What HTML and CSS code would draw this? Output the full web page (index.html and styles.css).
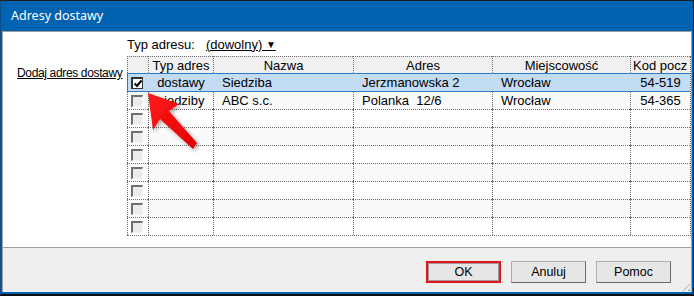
FILE: index.html
```html
<!DOCTYPE html>
<html lang="pl">
<head>
    <meta charset="UTF-8">
    <title>Adresy dostawy</title>
    <link rel="stylesheet" href="styles.css">
</head>
<body>
    <div class="window">
        <div class="titlebar">Adresy dostawy</div>
        <div class="client">
            <div class="content">
                <div class="side">
                    <a class="link" href="#">Dodaj adres dostawy</a>
                </div>
                <div class="main">
                    <div class="filter">
                        <span>Typ adresu:</span>
                        <span class="combo">(dowolny) <span class="tri">&#9660;</span></span>
                    </div>
                    <table class="grid">
                        <colgroup>
                            <col style="width: 21px">
                            <col style="width: 65px">
                            <col style="width: 140px">
                            <col style="width: 139px">
                            <col style="width: 138px">
                            <col style="width: 60px">
                        </colgroup>
                        <tr class="head">
                            <td></td>
                            <td>Typ adres</td>
                            <td>Nazwa</td>
                            <td>Adres</td>
                            <td>Miejscowość</td>
                            <td class="clip">Kod pocz</td>
                        </tr>
                        <tr class="sel">
                            <td><span class="cb checked"><svg width="10" height="10" viewBox="0 0 10 10"><path d="M1.5 4.5 L4 7 L8.5 1.5" fill="none" stroke="#000" stroke-width="2"/></svg></span></td>
                            <td class="c">dostawy</td>
                            <td class="l">Siedziba</td>
                            <td class="l">Jerzmanowska 2</td>
                            <td class="l">Wrocław</td>
                            <td class="c">54-519</td>
                        </tr>
                        <tr class="alt">
                            <td><span class="cb"></span></td>
                            <td class="c">siedziby</td>
                            <td class="l">ABC s.c.</td>
                            <td class="l">Polanka&nbsp; 12/6</td>
                            <td class="l">Wrocław</td>
                            <td class="c">54-365</td>
                        </tr>
                        <tr><td><span class="cb"></span></td><td></td><td></td><td></td><td></td><td></td></tr>
                        <tr class="alt"><td><span class="cb"></span></td><td></td><td></td><td></td><td></td><td></td></tr>
                        <tr><td><span class="cb"></span></td><td></td><td></td><td></td><td></td><td></td></tr>
                        <tr class="alt"><td><span class="cb"></span></td><td></td><td></td><td></td><td></td><td></td></tr>
                        <tr><td><span class="cb"></span></td><td></td><td></td><td></td><td></td><td></td></tr>
                        <tr class="alt"><td><span class="cb"></span></td><td></td><td></td><td></td><td></td><td></td></tr>
                        <tr><td><span class="cb"></span></td><td></td><td></td><td></td><td></td><td></td></tr>
                    </table>
                </div>
            </div>
            <div class="footer">
                <button class="btn ok">OK</button>
                <button class="btn">Anuluj</button>
                <button class="btn">Pomoc</button>
                <span class="grip"></span>
            </div>
        </div>

        <!-- red pointer arrow drawn over the grid -->
        <svg class="arrow" width="694" height="296" viewBox="0 0 694 296">
            <defs>
                <linearGradient id="red" x1="0" y1="0" x2="1" y2="1">
                    <stop offset="0" stop-color="#ff1a1a"/>
                    <stop offset="1" stop-color="#e00000"/>
                </linearGradient>
                <filter id="shadow" x="-30%" y="-30%" width="160%" height="160%">
                    <feDropShadow dx="2" dy="2" stdDeviation="2" flood-color="#000" flood-opacity="0.35"/>
                </filter>
            </defs>
            <polygon points="148,93 179,104 169,111 197,143 193,149 160,119 153,130" fill="url(#red)" filter="url(#shadow)"/>
        </svg>
    </div>
</body>
</html>
```

FILE: styles.css
```css
body {
    margin: 0;
    background: #ffffff;
    font-family: "Liberation Sans", Arial, sans-serif;
    font-size: 13px;
    color: #000;
}
.window {
    position: relative;
    width: 694px;
    height: 296px;
    box-sizing: border-box;
    border: 1px solid #1e1e1e;
    border-left-color: #0a4f8c;
    border-bottom-width: 2px;
    border-bottom-color: #111;
    background: #0063b1;
    padding: 0 1px 2px 1px;
    display: flex;
    flex-direction: column;
}
.titlebar {
    height: 30px;
    line-height: 30px;
    padding-left: 9px;
    color: #ffffff;
    font-family: "Noto Sans", "Open Sans", sans-serif;
    font-size: 12.5px;
}
.client {
    flex: 1;
    display: flex;
    flex-direction: column;
    border: 1px solid #a0a0a0;
    border-bottom: none;
    background: #efefef;
}
.content {
    flex: 1;
    background: #ffffff;
    display: grid;
    grid-template-columns: 124px 1fr;
    border-bottom: 1px solid #a0a0a0;
}
.side {
    padding: 33px 0 0 14px;
    white-space: nowrap;
    overflow: hidden;
}
.link {
    color: #000;
    font-size: 12px;
    letter-spacing: -0.35px;
    line-height: 14px;
    text-decoration: underline;
}
.main {
    overflow: hidden;
}
.filter {
    height: 24px;
    display: flex;
    align-items: center;
    gap: 11px;
}
.combo {
    text-decoration: underline;
    white-space: nowrap;
}
.tri {
    font-size: 10px;
    position: relative;
    top: -1px;
}
.grid {
    table-layout: fixed;
    width: 564px;
    border-collapse: separate;
    border-spacing: 0;
    border-right: 1px dotted #6e6e6e;
    border-bottom: 1px dotted #6e6e6e;
}
.grid td {
    box-sizing: border-box;
    height: 18px;
    padding: 0;
    border-left: 1px dotted #6e6e6e;
    border-top: 1px dotted #6e6e6e;
    white-space: nowrap;
    overflow: hidden;
    line-height: 16px;
    font-size: 13px;
}
.grid .head td {
    height: 17px;
    background: #f0f0f0;
    text-align: center;
    line-height: 15px;
}
.grid .head td.clip {
    text-align: left;
    padding-left: 2px;
}
.grid .alt td {
    background: #fafafa;
}
.grid .sel td {
    background: #c2dcf4;
    border-top: 1px solid #2b7bc2;
    border-left-color: transparent;
}
.grid .sel td:first-child {
    border-left: 1px solid #2b7bc2;
}
.grid .sel + tr td {
    border-top: 1px solid #2b7bc2;
}
.grid td.c {
    text-align: center;
}
.grid td.l {
    padding-left: 8px;
}
.cb {
    display: block;
    width: 12px;
    height: 12px;
    box-sizing: border-box;
    margin-left: 3px;
    border-top: 2px solid #6f6f6f;
    border-left: 2px solid #6f6f6f;
    border-right: 1px solid #f4f4f4;
    border-bottom: 1px solid #f4f4f4;
    background: #ececec;
}
.cb.checked {
    background: #ffffff;
    border: 1px solid #333;
    border-top: 2px solid #333;
    border-left: 2px solid #333;
}
.cb.checked svg {
    display: block;
}
.footer {
    height: 44px;
    box-sizing: border-box;
    padding: 13px 20px 0 0;
    display: flex;
    justify-content: flex-end;
    align-items: flex-start;
    gap: 10px;
    position: relative;
}
.btn {
    width: 75px;
    height: 22px;
    box-sizing: border-box;
    font-family: "Liberation Sans", Arial, sans-serif;
    font-size: 12.5px;
    color: #000;
    background: #e6e6e6;
    border: 1px solid #adadad;
    border-right-color: #6a6a6a;
    border-bottom-color: #6a6a6a;
    padding: 0;
}
.btn.ok {
    border: 2px solid #e3161c;
    box-shadow: inset 0 0 0 1px #9a9a9a;
}
.grip {
    position: absolute;
    right: 1px;
    bottom: 1px;
    width: 11px;
    height: 11px;
    background: repeating-linear-gradient(135deg, transparent 0 2px, #a8a8a8 2px 3px, transparent 3px 4px);
    clip-path: polygon(100% 0, 100% 100%, 0 100%);
}
.arrow {
    position: absolute;
    left: -1px;
    top: -1px;
    pointer-events: none;
}
```
